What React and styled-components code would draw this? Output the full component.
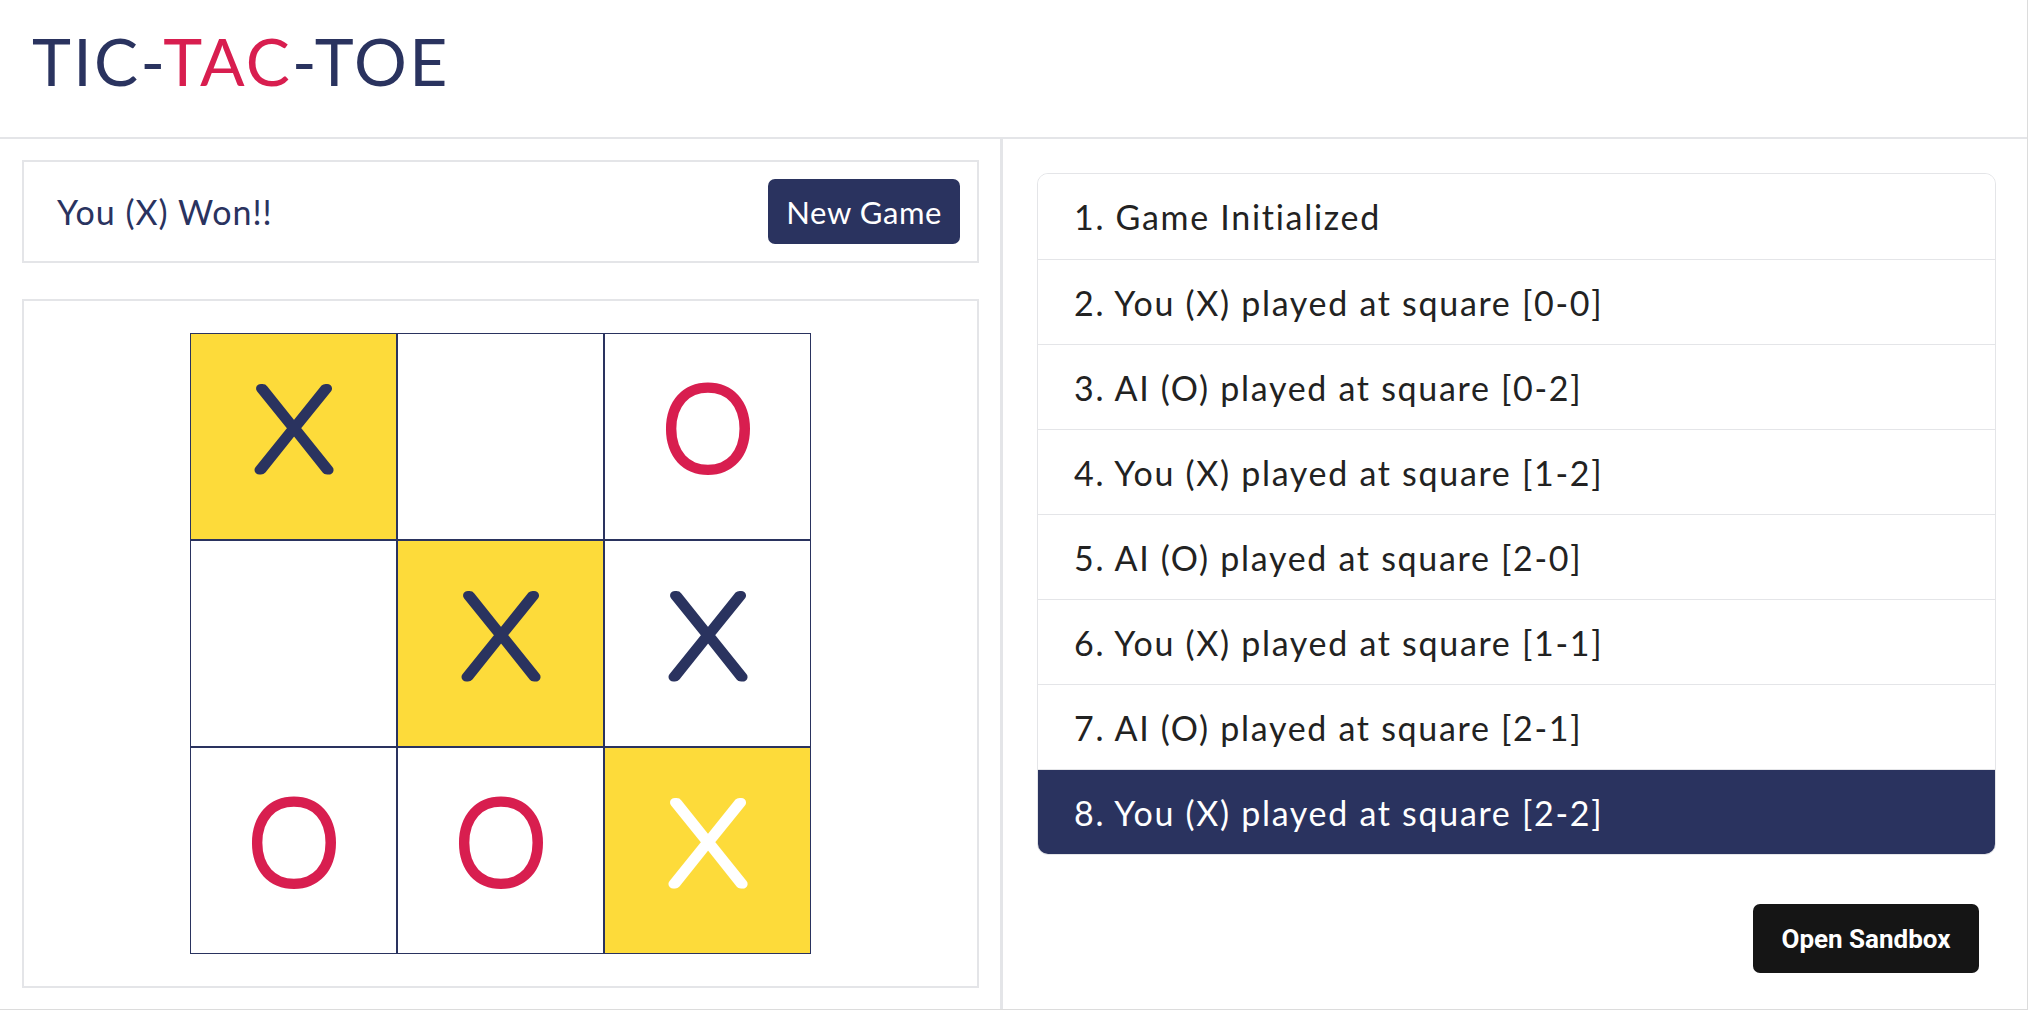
import React from 'react';
import styled, { createGlobalStyle } from 'styled-components';

const NAVY = '#2a335f';
const RED = '#d81e4f';
const YELLOW = '#fddb3a';
const LINE = '#e4e5e8';

const GlobalStyle = createGlobalStyle`
  html, body {
    margin: 0;
    padding: 0;
    background: #fff;
  }
  body {
    font-family: Lato, "Open Sans", sans-serif;
    color: #222;
  }
  * {
    box-sizing: border-box;
  }
`;

const Page = styled.div`
  position: relative;
  width: 2028px;
  height: 1010px;
  display: flex;
  flex-direction: column;
  border-right: 1px solid #dcdcdc;
  border-bottom: 1px solid #dcdcdc;
  overflow: hidden;
`;

const Header = styled.header`
  height: 139px;
  flex: none;
  display: flex;
  align-items: center;
  padding: 0 0 16px 32px;
  border-bottom: 2px solid ${LINE};
`;

const Title = styled.h1`
  margin: 0;
  font-family: Lato, sans-serif;
  font-weight: 400;
  font-size: 66px;
  letter-spacing: 2.3px;
  color: ${NAVY};

  span {
    color: ${RED};
  }
`;

const Main = styled.main`
  flex: 1;
  display: grid;
  grid-template-columns: 1003px 1fr;
  min-height: 0;
`;

const Left = styled.section`
  display: flex;
  flex-direction: column;
  gap: 36px;
  padding: 21px 21px 21px 22px;
  border-right: 3px solid ${LINE};
`;

const Card = styled.div`
  border: 2px solid ${LINE};
  background: #fff;
`;

const StatusCard = styled(Card)`
  height: 103px;
  flex: none;
  display: flex;
  align-items: center;
  justify-content: space-between;
  padding: 0 17px 0 33px;
`;

const Status = styled.div`
  font-size: 34px;
  letter-spacing: 1px;
  color: ${NAVY};
`;

const NavyButton = styled.button`
  height: 65px;
  padding: 0 18px;
  border: none;
  border-radius: 7px;
  background: ${NAVY};
  color: #fff;
  font-family: Lato, sans-serif;
  font-size: 31px;
  letter-spacing: 0.6px;
  cursor: pointer;
`;

const BoardCard = styled(Card)`
  flex: 1;
  display: flex;
  align-items: center;
  justify-content: center;
`;

const Board = styled.div`
  display: grid;
  grid-template-columns: repeat(3, 207px);
  grid-template-rows: repeat(3, 207px);
`;

const Cell = styled.div`
  border: 1px solid ${NAVY};
  background: ${(p) => (p.$win ? YELLOW : '#fff')};
  display: flex;
  align-items: center;
  justify-content: center;
`;

const MarkSvg = styled.svg`
  width: 140px;
  height: 140px;
  overflow: visible;

  text {
    font-family: Lato, sans-serif;
    font-weight: 100;
    font-size: 116px;
    stroke-width: 9px;
    stroke-linejoin: round;
  }
`;

const Right = styled.section`
  padding: 34px 31px 0 34px;
`;

const History = styled.ol`
  list-style: none;
  margin: 0;
  padding: 0;
  border: 1px solid ${LINE};
  border-radius: 11px;
  overflow: hidden;
`;

const Move = styled.li`
  height: 85px;
  display: flex;
  align-items: center;
  padding: 0 36px;
  font-size: 34px;
  letter-spacing: 1.7px;
  background: ${(p) => (p.$active ? NAVY : '#fff')};
  color: ${(p) => (p.$active ? '#fff' : '#222')};
  border-top: ${(p) => (p.$first ? 'none' : `1px solid ${LINE}`)};
`;

const SandboxButton = styled.button`
  position: absolute;
  right: 48px;
  bottom: 36px;
  width: 226px;
  height: 69px;
  border: none;
  border-radius: 7px;
  background: #151515;
  color: #fff;
  font-family: Roboto, sans-serif;
  font-weight: 700;
  font-size: 26px;
`;

const cells = [
  { v: 'X', win: true },
  { v: '' },
  { v: 'O' },
  { v: '' },
  { v: 'X', win: true },
  { v: 'X' },
  { v: 'O' },
  { v: 'O' },
  { v: 'X', win: true, last: true },
];

const moves = [
  'Game Initialized',
  'You (X) played at square [0-0]',
  'AI (O) played at square [0-2]',
  'You (X) played at square [1-2]',
  'AI (O) played at square [2-0]',
  'You (X) played at square [1-1]',
  'AI (O) played at square [2-1]',
  'You (X) played at square [2-2]',
];

function Mark({ v, last }) {
  if (!v) return null;
  const color = last ? '#fff' : v === 'X' ? NAVY : RED;
  const stretch = v === 'X' ? 'translate(70 0) scale(1.1 1) translate(-70 0)' : undefined;
  return (
    <MarkSvg viewBox="0 0 140 140">
      <g transform={stretch}>
        <text x="70" y="103" textAnchor="middle" fill={color} stroke={color}>
          {v}
        </text>
      </g>
    </MarkSvg>
  );
}

export default function App() {
  return (
    <Page>
      <GlobalStyle />
      <Header>
        <Title>
          TIC-<span>TAC</span>-TOE
        </Title>
      </Header>
      <Main>
        <Left>
          <StatusCard>
            <Status>You (X) Won!!</Status>
            <NavyButton>New Game</NavyButton>
          </StatusCard>
          <BoardCard>
            <Board>
              {cells.map((c, i) => (
                <Cell key={i} $win={c.win}>
                  <Mark v={c.v} last={c.last} />
                </Cell>
              ))}
            </Board>
          </BoardCard>
        </Left>
        <Right>
          <History>
            {moves.map((m, i) => (
              <Move key={i} $first={i === 0} $active={i === moves.length - 1}>
                {i + 1}. {m}
              </Move>
            ))}
          </History>
        </Right>
      </Main>
      <SandboxButton>Open Sandbox</SandboxButton>
    </Page>
  );
}
